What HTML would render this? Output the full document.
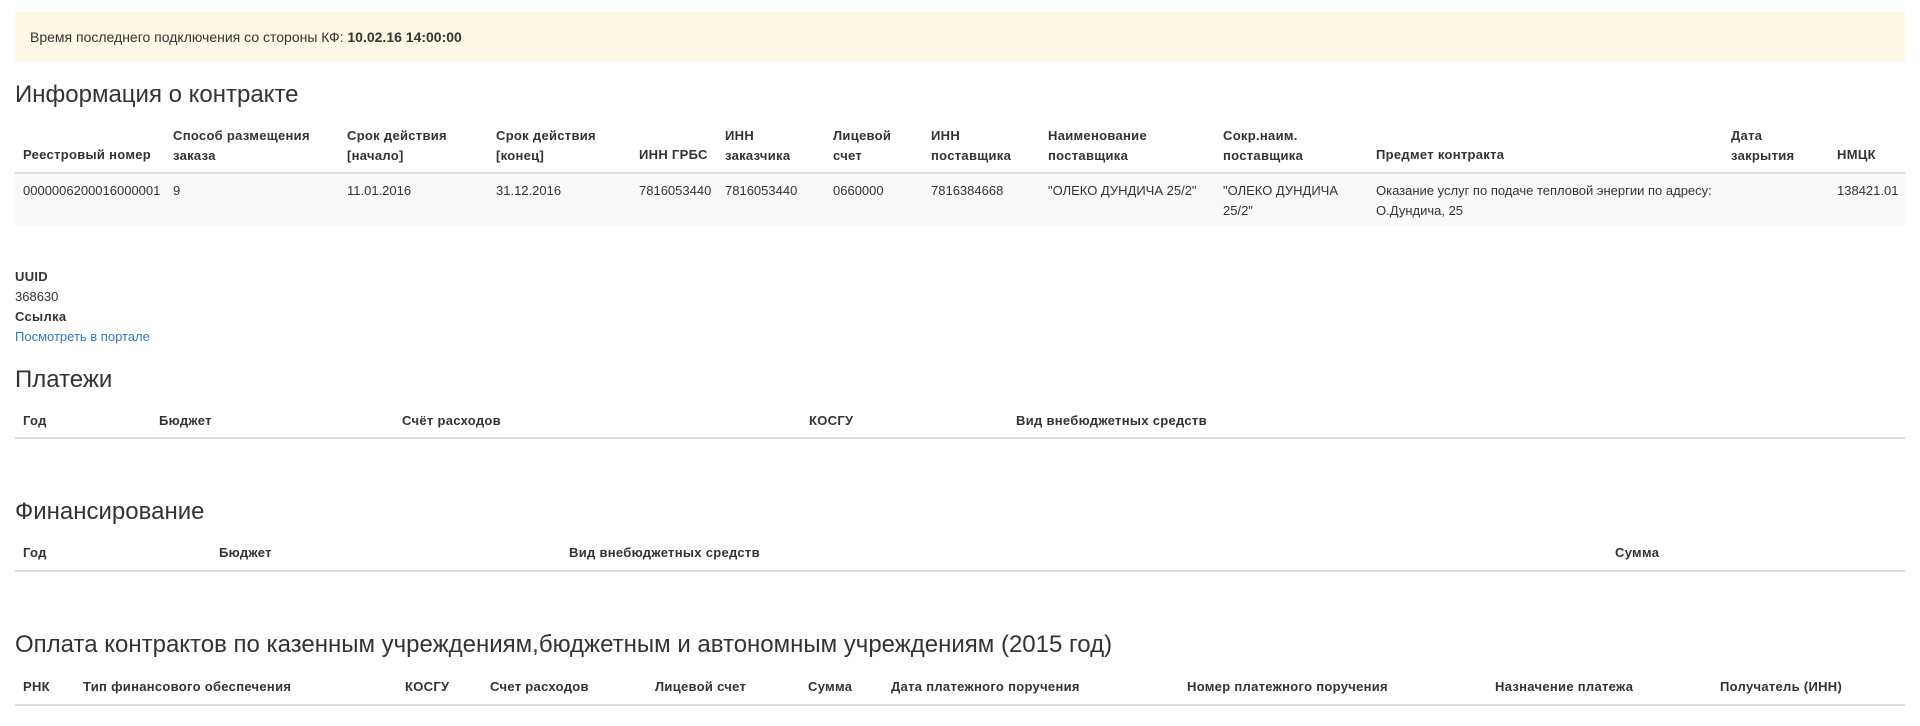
<!DOCTYPE html>
<html><head><meta charset="utf-8"><style>
*{margin:0;padding:0;box-sizing:border-box}
body{width:1920px;height:726px;overflow:hidden;background:#fff;font-family:"Liberation Sans",Arial,sans-serif;color:#333;font-size:13px;position:relative}
.a{position:absolute;white-space:nowrap;line-height:20px}
.h{position:absolute;font-size:24px;line-height:30px;color:#333;white-space:nowrap}
.b{font-weight:bold;letter-spacing:0.3px}
.line{position:absolute;left:15px;width:1890px;height:2px;background:#ddd}
</style></head><body>
<div style="position:absolute;left:15px;top:12px;width:1890px;height:49px;background:#fcf8e3"></div>
<div class="a" style="left:30px;top:27px;font-size:14px">Время последнего подключения со стороны КФ: <b>10.02.16 14:00:00</b></div>

<div class="h" style="left:15px;top:80px">Информация о контракте</div>
<div class="a b" style="left:23px;top:145px">Реестровый номер</div>
<div class="a b" style="left:173px;top:126px">Способ размещения<br>заказа</div>
<div class="a b" style="left:347px;top:126px">Срок действия<br>[начало]</div>
<div class="a b" style="left:496px;top:126px">Срок действия<br>[конец]</div>
<div class="a b" style="left:639px;top:145px">ИНН ГРБС</div>
<div class="a b" style="left:725px;top:126px">ИНН<br>заказчика</div>
<div class="a b" style="left:833px;top:126px">Лицевой<br>счет</div>
<div class="a b" style="left:931px;top:126px">ИНН<br>поставщика</div>
<div class="a b" style="left:1048px;top:126px">Наименование<br>поставщика</div>
<div class="a b" style="left:1223px;top:126px">Сокр.наим.<br>поставщика</div>
<div class="a b" style="left:1376px;top:145px">Предмет контракта</div>
<div class="a b" style="left:1731px;top:126px">Дата<br>закрытия</div>
<div class="a b" style="left:1837px;top:145px">НМЦК</div>
<div class="line" style="top:172px"></div>
<div style="position:absolute;left:15px;top:174px;width:1890px;height:52px;background:#f9f9f9"></div>
<div class="a" style="left:23px;top:181px">0000006200016000001</div>
<div class="a" style="left:173px;top:181px">9</div>
<div class="a" style="left:347px;top:181px">11.01.2016</div>
<div class="a" style="left:496px;top:181px">31.12.2016</div>
<div class="a" style="left:639px;top:181px">7816053440</div>
<div class="a" style="left:725px;top:181px">7816053440</div>
<div class="a" style="left:833px;top:181px">0660000</div>
<div class="a" style="left:931px;top:181px">7816384668</div>
<div class="a" style="left:1048px;top:181px">"ОЛЕКО ДУНДИЧА 25/2"</div>
<div class="a" style="left:1223px;top:181px">"ОЛЕКО ДУНДИЧА<br>25/2"</div>
<div class="a" style="left:1376px;top:181px">Оказание услуг по подаче тепловой энергии по адресу:<br>О.Дундича, 25</div>
<div class="a" style="left:1837px;top:181px">138421.01</div>

<div class="a b" style="left:15px;top:267px">UUID</div>
<div class="a" style="left:15px;top:287px">368630</div>
<div class="a b" style="left:15px;top:307px">Ссылка</div>
<div class="a" style="left:15px;top:327px;color:#337ab7">Посмотреть в портале</div>

<div class="h" style="left:15px;top:365px">Платежи</div>
<div class="a b" style="left:23px;top:411px">Год</div>
<div class="a b" style="left:159px;top:411px">Бюджет</div>
<div class="a b" style="left:402px;top:411px">Счёт расходов</div>
<div class="a b" style="left:809px;top:411px">КОСГУ</div>
<div class="a b" style="left:1016px;top:411px">Вид внебюджетных средств</div>
<div class="line" style="top:437px"></div>

<div class="h" style="left:15px;top:497px">Финансирование</div>
<div class="a b" style="left:23px;top:543px">Год</div>
<div class="a b" style="left:219px;top:543px">Бюджет</div>
<div class="a b" style="left:569px;top:543px">Вид внебюджетных средств</div>
<div class="a b" style="left:1615px;top:543px">Сумма</div>
<div class="line" style="top:570px"></div>

<div class="h" style="left:15px;top:630px">Оплата контрактов по казенным учреждениям,бюджетным и автономным учреждениям (2015 год)</div>
<div class="a b" style="left:23px;top:677px">РНК</div>
<div class="a b" style="left:83px;top:677px">Тип финансового обеспечения</div>
<div class="a b" style="left:405px;top:677px">КОСГУ</div>
<div class="a b" style="left:490px;top:677px">Счет расходов</div>
<div class="a b" style="left:655px;top:677px">Лицевой счет</div>
<div class="a b" style="left:808px;top:677px">Сумма</div>
<div class="a b" style="left:891px;top:677px">Дата платежного поручения</div>
<div class="a b" style="left:1187px;top:677px">Номер платежного поручения</div>
<div class="a b" style="left:1495px;top:677px">Назначение платежа</div>
<div class="a b" style="left:1720px;top:677px">Получатель (ИНН)</div>
<div class="line" style="top:704px"></div>
</body></html>
